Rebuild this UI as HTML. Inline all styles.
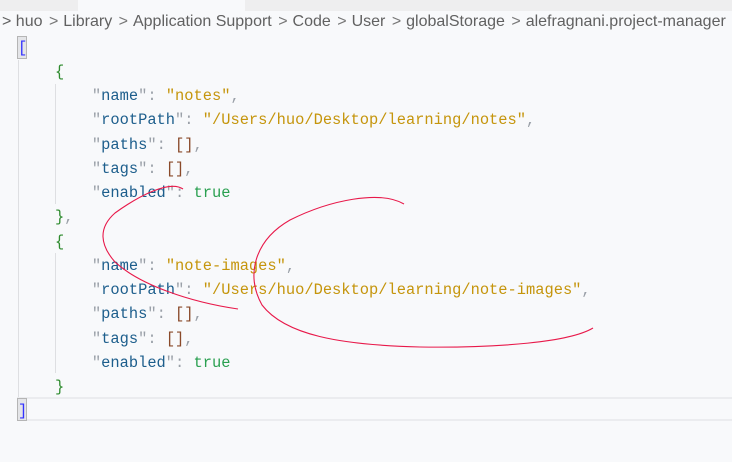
<!DOCTYPE html>
<html><head><style>
html,body{margin:0;padding:0;width:732px;height:462px;overflow:hidden;background:#f8f9fb;}
.tabs{position:absolute;left:0;top:0;width:732px;height:11px;background:#eeeeef;}
.tab{position:absolute;left:78px;top:0;width:167px;height:11px;background:#f8f9fb;}
.bc{position:absolute;left:2px;top:13px;font:16px "Liberation Sans",sans-serif;color:#616161;white-space:nowrap;}
.bc i{font-style:normal;color:#777;margin:0 5px 0 2px;}
.code{position:absolute;left:18px;top:35.5px;font:15.4px/24.25px "Liberation Mono",monospace;white-space:pre;color:#333;}
.k{color:#1d5e8c}.q{color:#9aa0a8}.s{color:#c5950c}.t{color:#2aa050}.b{color:#2e8b2e}.r{color:#8a4a2a}.o{color:#3333ff}
.cur{position:absolute;left:17px;top:397px;width:715px;height:20px;border-top:2px solid #ebecef;border-bottom:2px solid #ebecef;}
.g{position:absolute;width:1px;background:#dedfe2;}
.bx{position:absolute;left:17px;width:8px;height:21px;border:1px solid #b5b5b5;background:#e4e5e8;}
</style></head><body>
<div class="tabs"><div class="tab"></div></div>
<div class="bc">&gt; huo <i>&gt;</i>Library <i>&gt;</i>Application Support <i>&gt;</i>Code <i>&gt;</i>User <i>&gt;</i>globalStorage <i>&gt;</i>alefragnani.project-manager</div>
<div class="cur"></div>
<div class="bx" style="top:36px"></div>
<div class="bx" style="top:398px"></div>
<div class="g" style="left:18px;top:60px;height:337px"></div>
<div class="g" style="left:55px;top:84px;height:120px"></div>
<div class="g" style="left:55px;top:253px;height:120px"></div>
<div class="code"><span class="o">[</span>
    <span class="b">{</span>
        <span class="q">"</span><span class="k">name</span><span class="q">": </span><span class="s">"notes"</span><span class="q">,</span>
        <span class="q">"</span><span class="k">rootPath</span><span class="q">": </span><span class="s">"/Users/huo/Desktop/learning/notes"</span><span class="q">,</span>
        <span class="q">"</span><span class="k">paths</span><span class="q">": </span><span class="r">[]</span><span class="q">,</span>
        <span class="q">"</span><span class="k">tags</span><span class="q">": </span><span class="r">[]</span><span class="q">,</span>
        <span class="q">"</span><span class="k">enabled</span><span class="q">": </span><span class="t">true</span>
    <span class="b">}</span><span class="q">,</span>
    <span class="b">{</span>
        <span class="q">"</span><span class="k">name</span><span class="q">": </span><span class="s">"note-images"</span><span class="q">,</span>
        <span class="q">"</span><span class="k">rootPath</span><span class="q">": </span><span class="s">"/Users/huo/Desktop/learning/note-images"</span><span class="q">,</span>
        <span class="q">"</span><span class="k">paths</span><span class="q">": </span><span class="r">[]</span><span class="q">,</span>
        <span class="q">"</span><span class="k">tags</span><span class="q">": </span><span class="r">[]</span><span class="q">,</span>
        <span class="q">"</span><span class="k">enabled</span><span class="q">": </span><span class="t">true</span>
    <span class="b">}</span>
<span class="o">]</span></div>
<svg width="732" height="462" style="position:absolute;left:0;top:0" fill="none" stroke="#e8194a" stroke-width="1.1">
<path d="M183 189 C170 180 140 195 115 213 C98 228 100 245 115 262 C140 285 190 302 238 309"/>
<path d="M404 204 C380 190 330 200 290 220 C255 240 245 275 262 305 C285 335 340 345 420 347 C500 348 570 342 593 328"/>
</svg>
</body></html>
